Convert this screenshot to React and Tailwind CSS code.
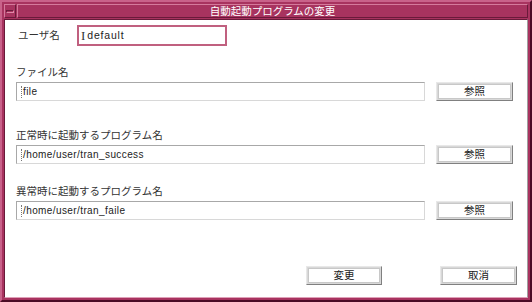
const jp = { fontFamily: '"Noto Sans CJK JP", "DejaVu Sans", sans-serif' };
const mono = { fontFamily: '"Liberation Sans", "DejaVu Sans", sans-serif' };

const Field = ({ value }) => (
  <div className="flex items-center h-[19px] flex-1 border border-t-[#a8a8a8] border-l-[#a8a8a8] border-r-[#d8d8d8] border-b-[#d8d8d8] bg-white pl-[4px]">
    <span className="w-[1px] h-[12px] border-l border-dotted border-[#777] mr-[1px]" />
    <span className="text-[10px] text-[#222] leading-none tracking-[0.4px]" style={mono}>{value}</span>
  </div>
);

const Btn = ({ label, w = 'w-[77px]' }) => (
  <div className={`${w} h-[19px] border border-t-[#e8e8e8] border-l-[#e8e8e8] border-r-[#808080] border-b-[#808080] bg-[#d8d8d8] p-[1px]`}>
    <div className="h-full flex items-center justify-center bg-white border border-[#c8c8c8] text-[10.5px] text-[#222] leading-none" style={jp}>
      {label}
    </div>
  </div>
);

const Row = ({ label, value }) => (
  <div className="flex flex-col">
    <div className="h-[14px] flex items-center text-[10.5px] text-[#333] leading-none" style={jp}>{label}</div>
    <div className="flex items-center mt-[3px] pr-[14px]">
      <Field value={value} />
      <div className="ml-[11px]">
        <Btn label="参照" />
      </div>
    </div>
  </div>
);

export default function App() {
  return (
    <div className="w-[532px] h-[302px] flex flex-col bg-[#a8335f] border-[2px] border-t-[#c9628a] border-l-[#c9628a] border-r-[#4a0c25] border-b-[#4a0c25] p-[2px]">
      <div className="h-[14px] flex items-stretch mb-[1px]">
        <div className="w-[12px] flex items-center justify-center border border-t-[#d57a9c] border-l-[#d57a9c] border-r-[#6a1a3a] border-b-[#6a1a3a]">
          <div className="w-[8px] h-[3px] border border-t-[#6a1a3a] border-l-[#6a1a3a] border-r-[#e08aa8] border-b-[#e08aa8]" />
        </div>
        <div className="flex-1 flex items-center justify-center border border-t-[#d57a9c] border-l-[#d57a9c] border-r-[#6a1a3a] border-b-[#6a1a3a] ml-[1px]">
          <span className="text-[10.5px] text-white leading-none" style={jp}>自動起動プログラムの変更</span>
        </div>
      </div>
      <div className="flex-1 flex flex-col bg-white border border-t-[#6a1a3a] border-l-[#6a1a3a] border-r-[#a0a0a0] border-b-[#e0a0b8] pl-[11px]">
        <div className="flex items-center mt-[5px]">
          <div className="w-[61px] text-[10.5px] text-[#333] leading-none pl-[2px]" style={jp}>ユーザ名</div>
          <div className="w-[150px] h-[21px] flex items-center border-[2px] border-[#c0607f] bg-white pl-[2px]">
            <span className="text-[13px] text-[#333] leading-none mr-[2px]" style={{ fontFamily: '"Liberation Serif", serif' }}>I</span>
            <span className="text-[10.5px] text-[#222] leading-none tracking-[0.8px]" style={mono}>default</span>
          </div>
        </div>
        <div className="mt-[19px]">
          <Row label="ファイル名" value="file" />
        </div>
        <div className="mt-[27px]">
          <Row label="正常時に起動するプログラム名" value="/home/user/tran_success" />
        </div>
        <div className="mt-[20px]">
          <Row label="異常時に起動するプログラム名" value="/home/user/tran_faile" />
        </div>
        <div className="flex mt-[46px]">
          <div className="ml-[290px]">
            <Btn label="変更" w="w-[76px]" />
          </div>
          <div className="ml-[58px]">
            <Btn label="取消" w="w-[77px]" />
          </div>
        </div>
      </div>
    </div>
  );
}
